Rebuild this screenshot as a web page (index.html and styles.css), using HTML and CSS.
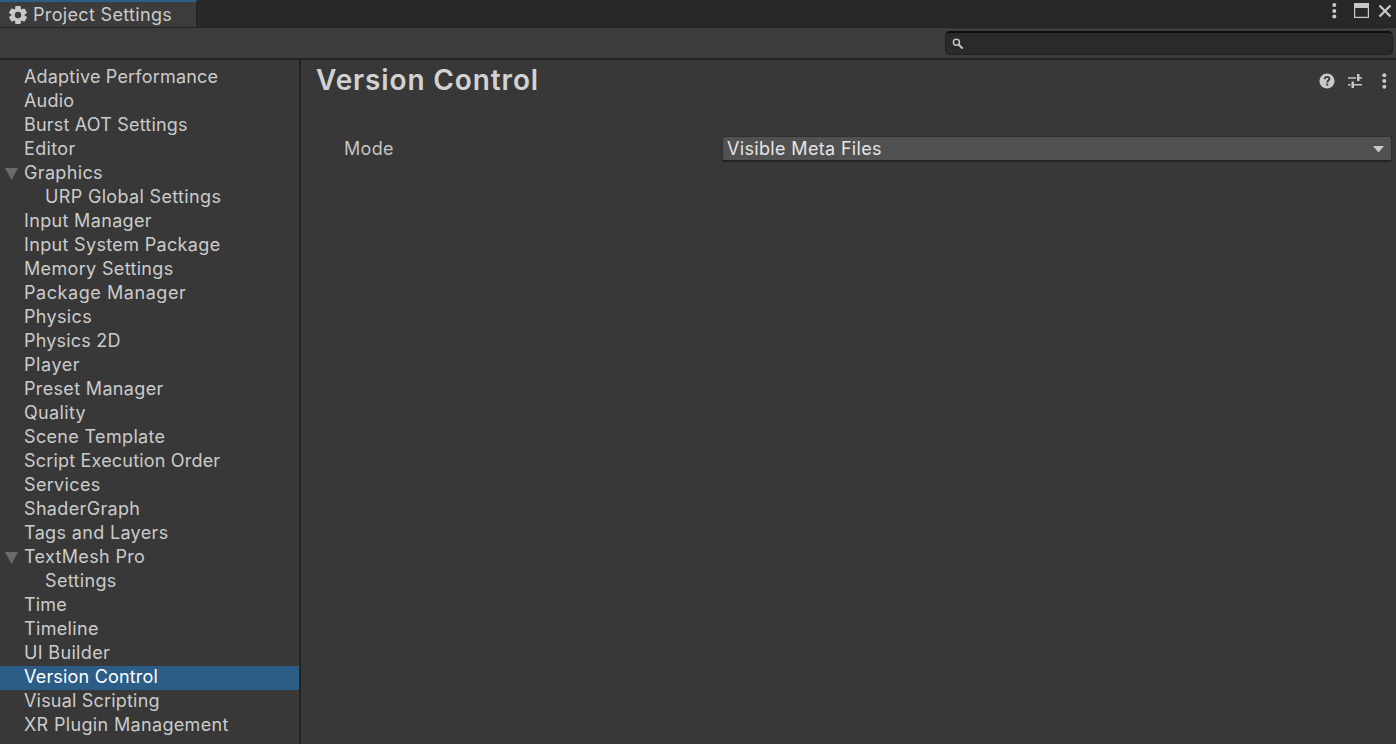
FILE: index.html
```html
<!DOCTYPE html>
<html lang="en">
<head>
<meta charset="utf-8">
<title>Project Settings</title>
<link rel="stylesheet" href="styles.css">
</head>
<body>
<div class="window">
  <header class="tabbar">
    <div class="tab">
      <svg class="gear" width="18" height="18" viewBox="0 0 18 18"><g fill="#c8c8c8"><rect x="6.2" y="0" width="5.6" height="18" rx="1"/><rect x="6.2" y="0" width="5.6" height="18" rx="1" transform="rotate(60 9 9)"/><rect x="6.2" y="0" width="5.6" height="18" rx="1" transform="rotate(120 9 9)"/><circle cx="9" cy="9" r="6.7"/></g><circle cx="9" cy="9" r="3.2" fill="#3c3c3c"/></svg>
      <span>Project Settings</span>
    </div>
    <div class="controls">
      <svg width="64" height="22" viewBox="0 0 64 22" fill="#c8c8c8"><circle cx="6.3" cy="5" r="2"/><circle cx="6.3" cy="11" r="2"/><circle cx="6.3" cy="16.5" r="2"/><path fill-rule="evenodd" d="M26 3h15v15H26zM27.2 8v8.8h12.6V8z"/><path d="M51.500 5.500l11 11M62.500 5.500l-11 11" stroke="#c8c8c8" stroke-width="2.300"/></svg>
    </div>
  </header>
  <div class="toolbar">
    <div class="search"><svg width="12" height="12" viewBox="0 0 12 12" fill="none" stroke="#c4c4c4"><circle cx="4.4" cy="4.2" r="3" stroke-width="1.5"/><path d="M6.6 6.5l4 4" stroke-width="2"/></svg></div>
  </div>
  <main class="body">
    <nav class="sidebar">
      <div class="item tight">Adaptive Performance</div>
      <div class="item tight">Audio</div>
      <div class="item tight">Burst AOT Settings</div>
      <div class="item">Editor</div>
      <div class="item parent"><svg class="fold" width="13" height="12" viewBox="0 0 13 12"><path d="M0 0h13L6.5 12z" fill="#6b6b6b"/></svg>Graphics</div>
      <div class="item child">URP Global Settings</div>
      <div class="item">Input Manager</div>
      <div class="item">Input System Package</div>
      <div class="item">Memory Settings</div>
      <div class="item loose">Package Manager</div>
      <div class="item">Physics</div>
      <div class="item tight">Physics 2D</div>
      <div class="item loose">Player</div>
      <div class="item">Preset Manager</div>
      <div class="item">Quality</div>
      <div class="item">Scene Template</div>
      <div class="item tight">Script Execution Order</div>
      <div class="item">Services</div>
      <div class="item">ShaderGraph</div>
      <div class="item">Tags and Layers</div>
      <div class="item parent"><svg class="fold" width="13" height="12" viewBox="0 0 13 12"><path d="M0 0h13L6.5 12z" fill="#6b6b6b"/></svg>TextMesh Pro</div>
      <div class="item child">Settings</div>
      <div class="item tight">Time</div>
      <div class="item">Timeline</div>
      <div class="item">UI Builder</div>
      <div class="item tight selected">Version Control</div>
      <div class="item tight">Visual Scripting</div>
      <div class="item">XR Plugin Management</div>
    </nav>
    <section class="content">
      <div class="heading">
        <h1>Version Control</h1>
        <svg width="72" height="20" viewBox="0 0 72 20" fill="#c8c8c8"><circle cx="8" cy="10" r="7.6"/><path d="M5.7 8.1C5.8 6.5 6.8 5.9 8.1 5.9c1.400 0 2.300.8 2.300 1.900 0 1.700-2.200 1.700-2.200 3.700" fill="none" stroke="#383838" stroke-width="1.800"/><rect x="7.200" y="12.600" width="2" height="2" fill="#383838"/><path d="M29 6.300h8v1.500h-8zM38 3h2.500v3.300H43v1.500h-2.500V10H38zM29 13h2.500v1.500H29zM32.500 10.500H35V13h8v1.500h-8V17h-2.500z"/><circle cx="65.300" cy="4.200" r="2"/><circle cx="65.300" cy="10" r="2"/><circle cx="65.300" cy="15.800" r="2"/></svg>
      </div>
      <div class="field">
        <span class="label">Mode</span>
        <div class="dropdown"><span>Visible Meta Files</span><svg width="11" height="7" viewBox="0 0 11 7"><path d="M0 0h11L5.500 6.500z" fill="#c8c8c8"/></svg></div>
      </div>
    </section>
  </main>
</div>
</body>
</html>
```
FILE: styles.css
```css
* { box-sizing: border-box; }
body { margin: 0; background: #383838; color: #cbcbcb; font: 18px/24px Inter, sans-serif; letter-spacing: 0.34px; }
.window { width: 1396px; height: 744px; display: flex; flex-direction: column; overflow: hidden; }
.tabbar { height: 28px; flex: none; display: flex; justify-content: space-between; background: #282828; border-bottom: 1px solid #232323; }
.tab { width: 197px; display: flex; align-items: center; gap: 6px; padding-left: 9px; background: #3c3c3c; border-top: 2px solid #2c5d87; border-right: 1px solid #232323; white-space: nowrap; }
.gear { flex: none; }
.controls { width: 68px; }
.controls svg { display: block; }
.toolbar { height: 32px; flex: none; padding: 3px 3px 0 945px; background: #3c3c3c; border-bottom: 2px solid #232323; }
.search { height: 24px; display: flex; align-items: center; padding-left: 6px; background: #2a2a2a; border: 1px solid #212121; border-top: 2px solid #0d0d0d; border-radius: 5px; }
.body { flex: 1; display: flex; min-height: 0; }
.sidebar { width: 301px; flex: none; padding-top: 6px; border-right: 2px solid #232323; }
.item { height: 24px; line-height: 22px; padding-left: 24px; white-space: nowrap; }
.tight { letter-spacing: 0.19px; }
.loose { letter-spacing: 0.56px; }
.parent { display: flex; padding-left: 5px; }
.fold { margin: 6px 6px 0 0; }
.child { padding-left: 45px; }
.selected { background: #2c5d87; color: #fff; }
.content { flex: 1; }
.heading { height: 41px; display: flex; justify-content: space-between; padding: 0 5px 0 15px; }
h1 { margin: 0; font-size: 28px; line-height: 41px; font-weight: 600; letter-spacing: 0.87px; color: #d2d2d2; }
.heading svg { margin-top: 11px; }
.field { display: flex; margin-top: 35px; padding: 0 4px 0 43px; }
.label { width: 378px; line-height: 26px; color: #c4c4c4; }
.dropdown { flex: 1; height: 26px; display: flex; align-items: center; justify-content: space-between; padding: 0 7px 0 4px; background: #515151; border: 1px solid #303030; border-bottom: 2px solid #242424; border-radius: 3px; color: #e4e4e4; }
.dropdown svg { margin-top: 2px; }
```
